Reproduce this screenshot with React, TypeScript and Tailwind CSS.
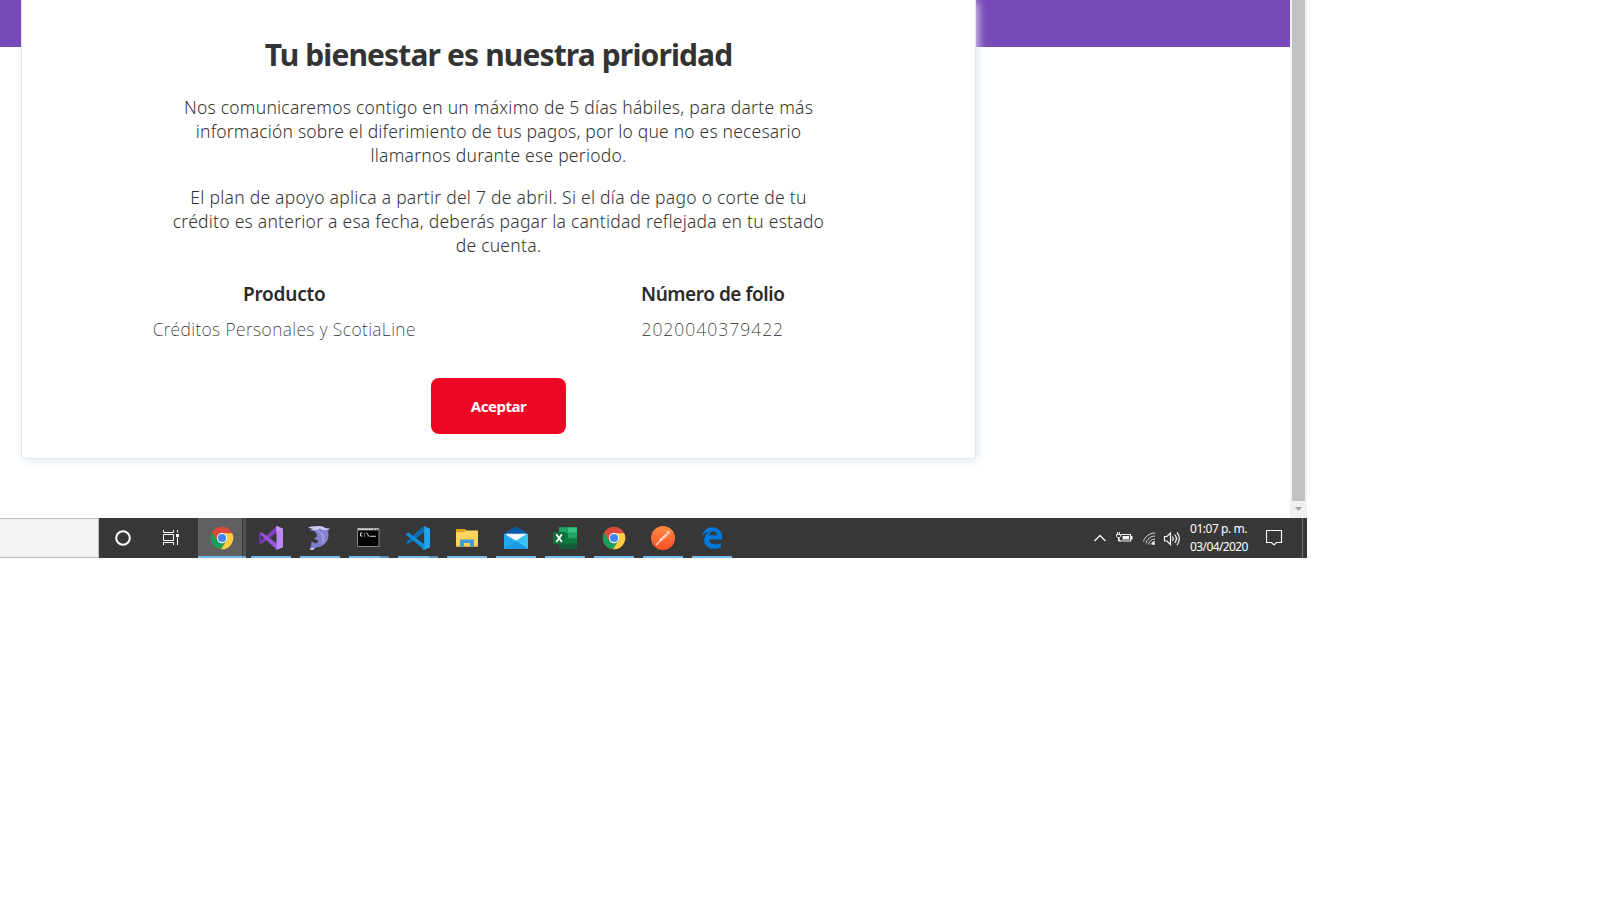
import type { ReactNode } from 'react'

function Chrome() {
  return (
    <svg width="24" height="24" viewBox="0 0 24 24">
      <circle cx="12" cy="12" r="11.2" fill="#db4a3c" />
      <path d="M2.3 6.4A11.2 11.2 0 0 0 11 23.15L16.6 14.6 12 12 7.3 14.7Z" fill="#1a9e5b" />
      <path d="M22.15 7.2H12L16.7 14.6 11 23.15A11.2 11.2 0 0 0 22.15 7.2Z" fill="#fdd03f" />
      <circle cx="12" cy="12" r="5.2" fill="#f4f4f4" />
      <circle cx="12" cy="12" r="4.1" fill="#4587f3" />
    </svg>
  )
}

function VisualStudio() {
  return (
    <svg width="24" height="24" viewBox="0 0 24 24">
      <path d="M0 6.8 2 5.8V18.2L0 17.2Z" fill="#6a35a5" />
      <path d="M2 18.2 18 6.500V0L2 14.800Z" fill="#7f40bd" />
      <path d="M2 5.8 18 17.500V24L2 9.200Z" fill="#9455d6" />
      <path d="M17.500 0 24 2.8V21.2L17.500 24Z" fill="#b98af5" />
      <path d="M17.500 0 24 2.8 21 4 17.500 5.500Z" fill="#c69cf8" />
    </svg>
  )
}

function Dolphin() {
  return (
    <svg width="24" height="24" viewBox="0 0 24 24">
      <path d="M0 1.500C3 0 6 1 8 .3 12-.3 15 .5 17 2L22 2.800 20 5C21.500 11 19.500 17 14 20 11 21.500 8 21 7 22L4.500 24 1.500 23.200 3 20 3.500 15.500 7.500 17.500C9.500 17 10.500 15.500 10 14L9.500 14.500 6 12.500 9 10.500C9 8 8 6 5.500 5L1.500 4.200 4 3Z" fill="#8080cc" />
      <path d="M0 1.500C3 0 6 1 8 .3 12-.3 15 .5 17 2L21.500 2.800 18.500 4 15 4.200 12 2.500 9 4.200 4 3.800 5 2.700Z" fill="#c9caec" />
      <path d="M11 5C18 7 18.500 14 13 18.800 15.500 11 14 8 9 5.200Z" fill="#9c9be3" />
      <path d="m1.500 23.200 2.500-1 3-.2L4.500 24Z" fill="#dedff0" />
    </svg>
  )
}

function Terminal() {
  return (
    <svg width="24" height="24" viewBox="0 0 24 24">
      <path d="M.5 2.500h21.500v18H.5z" fill="#050505" stroke="#8a8a8a" />
      <path d="M1 2.500h20.500v1.800H1z" fill="#d0d0d0" />
      <path d="M16 3h1.500v1H16zM19 3h1.500v1H19z" fill="#777" />
      <path d="M5.500 7H3.500v3h2M7.500 7.300v1M7.500 9.500v1M9.500 6.500l2.500 4.200M13 10.300h6" fill="none" stroke="#d5d5d5" strokeWidth="1" />
    </svg>
  )
}

function VSCode() {
  return (
    <svg width="24" height="24" viewBox="0 0 24 24">
      <path d="M0 16.200 17.500 0l.8 6.200L2 18.200.2 16.800Z" fill="#0b70b5" />
      <path d="M0 8.200 2 6.200 18.500 18.300V24L.2 9Z" fill="#0d8bd6" />
      <path d="M17.800 0 24 2.800V21.200L17.800 24 16.500 23.300 18.200 22V2Z" fill="#25a5ef" />
    </svg>
  )
}

function Explorer() {
  return (
    <svg width="24" height="24" viewBox="0 0 24 24">
      <path d="M1 3h9l1 1.500h12V20.500H1z" fill="#ffd35f" />
      <path d="M1 3h9v2.500L9 6.300H1z" fill="#e3a21a" />
      <path d="M1 19.500h22v1.200H1z" fill="#f0b83f" />
      <path d="M5 13.500h14v7.300h-4V17H9v3.800H5z" fill="#3e9bdd" />
    </svg>
  )
}

function Mail() {
  return (
    <svg width="24" height="24" viewBox="0 0 24 24">
      <path d="M0 7.500 12 .5l12 7V12H0Z" fill="#0c5cae" />
      <path d="M2 7.700h20v4L12 18 2 11.700Z" fill="#f7f7f7" />
      <path d="M0 7.500 12 14.800 24 7.500V23H0Z" fill="#22a8ee" />
      <path d="M24 7.500V23L12 14.800Z" fill="#36c4f5" />
      <path d="M0 23 12 14.800 24 23Z" fill="#1b9be6" />
    </svg>
  )
}

function Excel() {
  return (
    <svg width="24" height="24" viewBox="0 0 24 24">
      <path d="M6 1.300h18v21.300H6z" fill="#107c41" />
      <path d="M6 1.300h9v5.500H6z" fill="#21a366" />
      <path d="M15 1.300h9v5.500h-9z" fill="#33c481" />
      <path d="M15 6.800h9v5.400h-9z" fill="#21a366" />
      <path d="M6 17.400h18v5.200H6z" fill="#185c37" />
      <path d="M0 6h12.300v12.200H0z" fill="#0f7039" />
      <path d="m3.300 8.200 5.600 7.800M8.900 8.200 3.300 16" stroke="#fff" strokeWidth="1.9" />
    </svg>
  )
}

function Postman() {
  return (
    <svg width="24" height="24" viewBox="0 0 24 24">
      <defs>
        <linearGradient id="pm" x1="0" y1="0" x2="0" y2="1">
          <stop stopColor="#ff8a45" />
          <stop offset="1" stopColor="#fd4f25" />
        </linearGradient>
      </defs>
      <circle cx="12" cy="12" r="12" fill="url(#pm)" />
      <path d="m5 19 5-5" stroke="#ffe5da" strokeWidth="1.1" />
      <path d="m9 13.200 6-5.600 1.800 1.700-6 5.200-2 .5Z" fill="#fff0e9" />
      <circle cx="17.200" cy="6.600" r="1.800" fill="#ffd9c9" />
      <path d="m10.500 13.500 5.500-5M16.500 7l1.500-1.500" stroke="#fd7446" strokeWidth=".7" />
    </svg>
  )
}

function Edge() {
  return (
    <svg width="24" height="24" viewBox="0 0 24 24">
      <path d="M2.100 10.300C3 4.800 6.800 1.300 12.300 1.300c6 0 9.900 4.400 9.900 10v2.200H9.200c.2 3.300 2.700 4.900 6 4.900 2.200 0 4-.6 5.700-1.600v4.400c-2 1.100-4.300 1.600-6.800 1.600-5.800 0-10-3.100-10-8.900 0-3.500 1.900-6.500 5.200-7.900-3.300.4-5.700 2-7.200 4.300Zm7.300-1h7.200c0-2.600-1.300-4-3.400-4-2.100 0-3.500 1.600-3.800 4Z" fill="#0078d7" />
    </svg>
  )
}

function TaskItem({ children, stacked }: { children: ReactNode; stacked?: boolean }) {
  return (
    <div className="flex h-10 w-[49px] flex-col">
      <div className="ml-3 flex h-[38px] w-6 items-end pb-1.5 pt-2">{children}</div>
      <div className="ml-1 flex h-0.5 w-10">
        <div className="grow bg-[#76b9ed]" />
        {stacked && <div className="w-[9px] bg-[#5d8fb8]" />}
      </div>
    </div>
  )
}

function Taskbar() {
  return (
    <footer className="flex h-10 w-[1307px] bg-[#373737]">
      <div className="h-10 w-[99px] border-y border-r border-[#bdbdbd] bg-[#f2f2f2]" />
      <div className="flex w-[99px] items-center">
        <svg width="99" height="40" viewBox="0 0 99 40" fill="none" stroke="#fff">
          <circle cx="24" cy="20" r="6.800" strokeWidth="2" />
          <path d="M64.500 12v2.500h10V12M64.500 27v-2.500h10V27M64.500 16.500h10v6h-10zM78.500 12v2.500M78.500 19.500V27" strokeWidth="1" />
          <path d="M77 16h3v3h-3z" fill="#fff" stroke="none" />
        </svg>
      </div>
      <div className="flex h-10 w-[49px] flex-col">
        <div className="flex h-[38px] w-12">
          <div className="flex w-11 items-center bg-[#606060] pl-3 pt-0.5">
            <Chrome />
          </div>
          <div className="w-px bg-[#353535]" />
          <div className="grow bg-[#505050]" />
        </div>
        <div className="flex h-0.5 w-12">
          <div className="w-11 bg-[#76b9ed]" />
          <div className="grow bg-[#6ba6d5]" />
        </div>
      </div>
      <TaskItem><VisualStudio /></TaskItem>
      <TaskItem><Dolphin /></TaskItem>
      <TaskItem stacked><Terminal /></TaskItem>
      <TaskItem stacked><VSCode /></TaskItem>
      <TaskItem><Explorer /></TaskItem>
      <TaskItem><Mail /></TaskItem>
      <TaskItem><Excel /></TaskItem>
      <TaskItem><Chrome /></TaskItem>
      <TaskItem><Postman /></TaskItem>
      <TaskItem><Edge /></TaskItem>
      <div className="ml-auto flex">
        <svg width="100" height="40" viewBox="1090 518 100 40" fill="none" stroke="#f5f5f5">
          <path d="m1094.500 541 5.500-5.500 5.500 5.500" strokeWidth="1.300" />
          <path d="M1121 534.500h9.500v6.500h-11.500v-3" strokeWidth="1.200" />
          <path d="M1131 536h1.500v3.500h-1.500z" fill="#f5f5f5" stroke="none" />
          <path d="M1122.500 536h6.500v3.500h-6.500z" fill="#f5f5f5" stroke="none" />
          <path d="M1116.500 534.500h4v2l-1 1h-2l-1-1zM1117.500 532v2.500M1119.500 532v2.500M1118.500 538v2.500h2" />
          <path d="M1143.500 541.500c1-4.500 6-8.500 11.500-8.500M1146 543.500c.5-4 4.500-7.500 9-7.500M1148.500 544.500c.5-3 3-5.500 6.500-5.500M1151 544.500c.3-1.500 1.800-3 4-3" opacity=".85" />
          <circle cx="1153.500" cy="543.500" r="1.500" fill="#f5f5f5" stroke="none" />
          <path d="M1164.500 536.500h2.500l3.500-3.500v11.500l-3.500-3.500h-2.500z" strokeWidth="1.200" />
          <path d="M1172.500 536.500c1 1.500 1 3 0 4.500M1174.700 534.500c2 2.500 2 6 0 8.500M1177 532.500c3 3.500 3 9 0 12.500" strokeWidth="1.200" />
        </svg>
        <div className="w-[76px] whitespace-nowrap pt-0.5 font-['Noto_Sans','Open_Sans',sans-serif] text-[12px] leading-[18px] text-white">
          <div className="tracking-[-0.45px]">01:07 p. m.</div>
          <div className="tracking-[-0.6px]">03/04/2020</div>
        </div>
        <svg width="41" height="40" viewBox="1266 518 41 40" fill="none" stroke="#f5f5f5">
          <path d="M1266.500 530.500h15v12h-5l-2.500 2.500-2.500-2.500h-5z" strokeWidth="1.200" />
          <path d="M1302.500 518v40" stroke="#757575" />
        </svg>
      </div>
    </footer>
  )
}

export default function App() {
  return (
    <div className="h-[900px] w-[1600px] overflow-hidden bg-white font-['Noto_Sans','Open_Sans',sans-serif] text-[#333]">
      <div className="flex h-[518px] w-[1307px] overflow-hidden">
        <main className="flex w-[1290px] items-start bg-[linear-gradient(#7849b8_47px,#fff_47px)]">
          <div className="relative z-10 h-[47px] w-[21px] bg-[#7849b8]" />
          <section className="h-[459px] w-[955px] overflow-hidden rounded-b-[3px] border border-t-0 border-[#e2e6ee] bg-white text-center shadow-[2px_2px_10px_rgba(222,230,240,0.9)]">
            <h1 className="mt-[35px] whitespace-nowrap text-[30px] font-bold leading-10 tracking-[-0.87px]">Tu bienestar es nuestra prioridad</h1>
            <div className="mt-5 whitespace-nowrap text-[17.500px] font-light leading-6">
              <p className="tracking-[0.24px]">Nos comunicaremos contigo en un máximo de 5 días hábiles, para darte más</p>
              <p className="tracking-[0.19px]">información sobre el diferimiento de tus pagos, por lo que no es necesario</p>
              <p className="tracking-[0.24px]">llamarnos durante ese periodo.</p>
            </div>
            <div className="mt-[18px] whitespace-nowrap text-[17.500px] font-light leading-6">
              <p className="tracking-[0.26px]">El plan de apoyo aplica a partir del 7 de abril. Si el día de pago o corte de tu</p>
              <p className="tracking-[0.24px]">crédito es anterior a esa fecha, deberás pagar la cantidad reflejada en tu estado</p>
              <p className="tracking-[0.24px]">de cuenta.</p>
            </div>
            <div className="mx-auto mt-[22px] flex w-[857px] whitespace-nowrap text-[#2b2b2b]">
              <div className="w-1/2">
                <h2 className="text-[19px] font-semibold leading-[30px] tracking-[-0.2px]">Producto</h2>
                <p className="mt-[5px] text-[17.500px] font-extralight leading-[30px] tracking-[0.39px]">Créditos Personales y ScotiaLine</p>
              </div>
              <div className="w-1/2">
                <h2 className="text-[19px] font-semibold leading-[30px] tracking-[-0.46px]">Número de folio</h2>
                <p className="mt-[5px] text-[17.500px] font-extralight leading-[30px] tracking-[1px]">2020040379422</p>
              </div>
            </div>
            <button className="mt-[34px] h-14 w-[135px] rounded-lg bg-[#ee0722] text-[15px] font-bold tracking-[-0.5px] text-white">Aceptar</button>
          </section>
        </main>
        <div className="flex w-[17px] flex-col items-center bg-[#f1f1f1]">
          <div className="h-[501px] w-[13px] bg-[#c1c1c1]" />
          <svg className="mt-1.5" width="7" height="4" viewBox="0 0 7 4"><path d="M0 0h7L3.500 4z" fill="#a0a0a0" /></svg>
        </div>
      </div>
      <Taskbar />
    </div>
  )
}
